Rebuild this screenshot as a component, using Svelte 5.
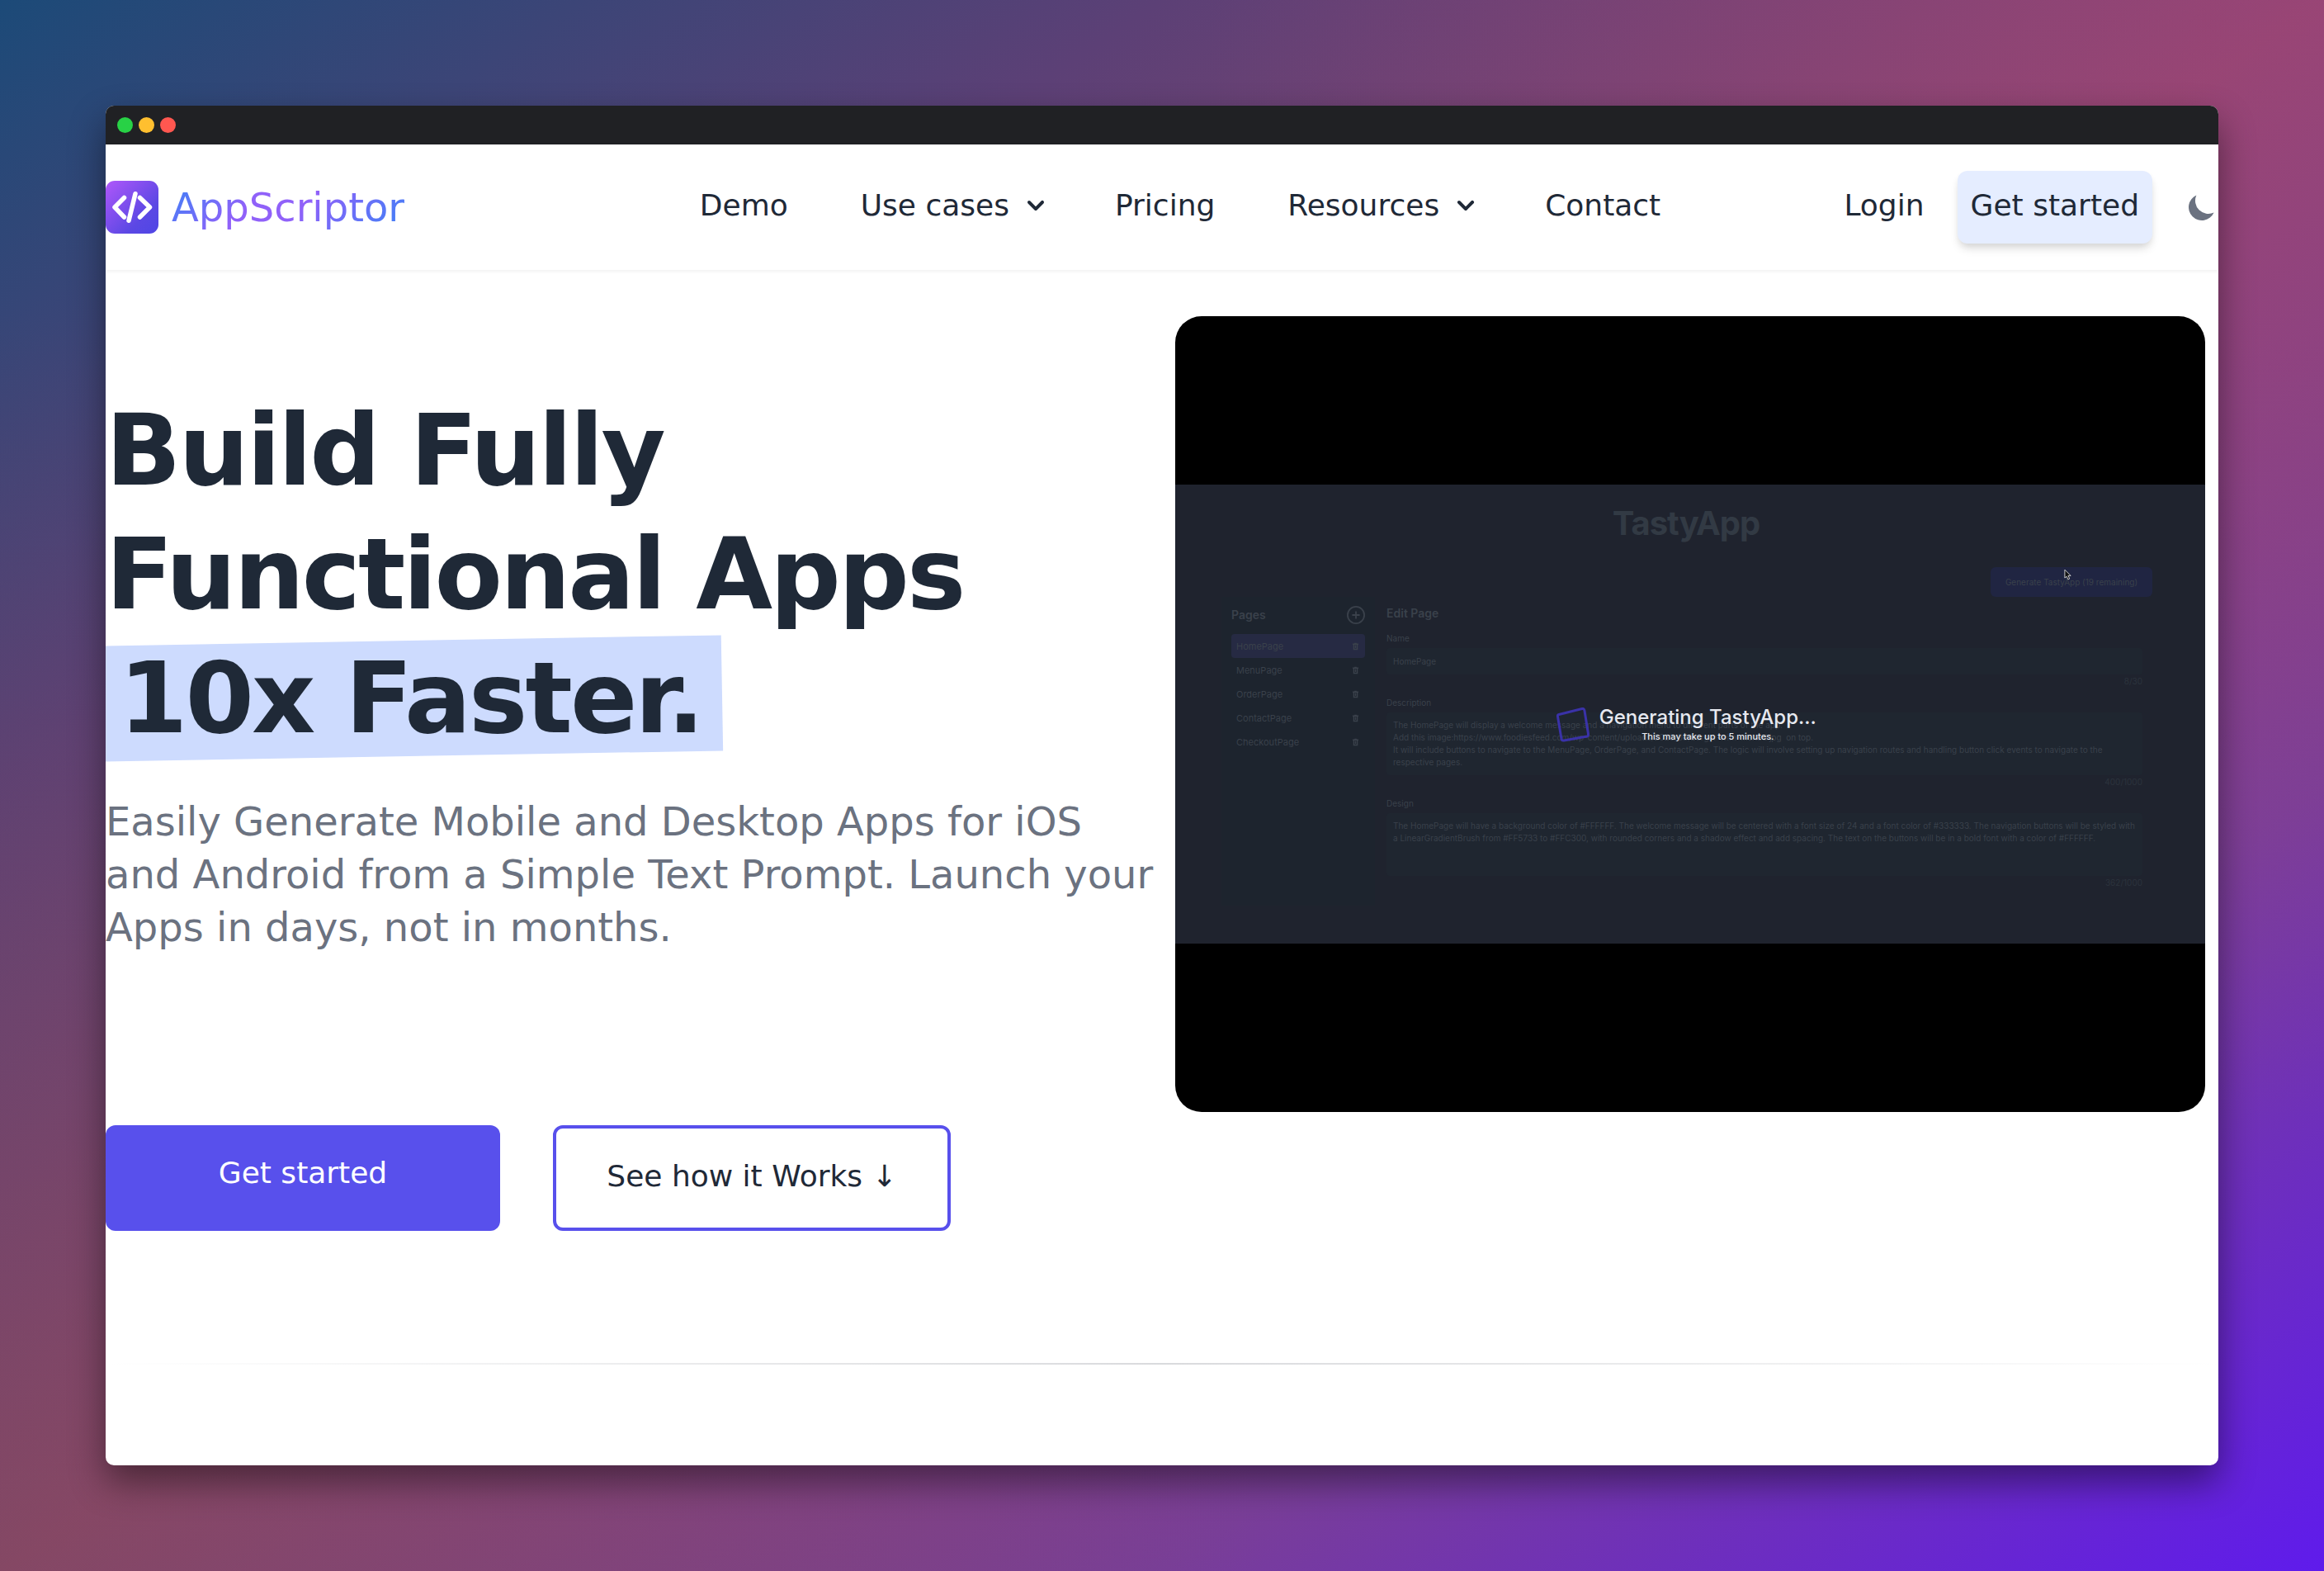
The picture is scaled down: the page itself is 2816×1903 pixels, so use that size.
<script>
  const pages = ['HomePage', 'MenuPage', 'OrderPage', 'ContactPage', 'CheckoutPage'];
  const description =
    'The HomePage will display a welcome message and a navigation menu to different parts of the app.\nAdd this image:https://www.foodiesfeed.com/wp-content/uploads/2023/06/burger-with-melted.jpg  on top.\nIt will include buttons to navigate to the MenuPage, OrderPage, and ContactPage. The logic will involve setting up navigation routes and handling button click events to navigate to the respective pages.';
  const design =
    'The HomePage will have a background color of #FFFFFF. The welcome message will be centered with a font size of 24 and a font color of #333333. The navigation buttons will be styled with a LinearGradientBrush from #FF5733 to #FFC300, with rounded corners and a shadow effect and add spacing. The text on the buttons will be in a bold font with a color of #FFFFFF.';
</script>

{#snippet chevron()}
  <svg class="chevron" viewBox="0 0 20 20" aria-hidden="true">
    <path
      fill="currentColor"
      fill-rule="evenodd"
      d="M5.293 7.293a1 1 0 011.414 0L10 10.586l3.293-3.293a1 1 0 111.414 1.414l-4 4a1 1 0 01-1.414 0l-4-4a1 1 0 010-1.414z"
    />
  </svg>
{/snippet}

<div class="desktop">
  <div class="window">
    <div class="titlebar">
      <span class="dot green"></span>
      <span class="dot yellow"></span>
      <span class="dot red"></span>
    </div>

    <header>
      <a class="brand" href="#home">
        <svg class="logo" viewBox="0 0 64 64" aria-hidden="true">
          <defs>
            <linearGradient id="logo-fill" x1="0" y1="0" x2="1" y2="1">
              <stop offset="0" stop-color="#b057fa" />
              <stop offset="0.7" stop-color="#5b48e4" />
              <stop offset="1" stop-color="#4f46e5" />
            </linearGradient>
          </defs>
          <rect width="64" height="64" rx="11" fill="url(#logo-fill)" />
          <g fill="none" stroke="#fff" stroke-width="5.500" stroke-linecap="round" stroke-linejoin="round">
            <path d="M22.500 20.500 11 32 22.500 44" />
            <path d="M41.500 20.500 53.500 32 41.500 44" />
            <path d="M36 15.700 28 48.300" />
          </g>
        </svg>
        <span class="name">AppScriptor</span>
      </a>
      <nav>
        <a href="#demo">Demo</a>
        <button type="button">Use cases {@render chevron()}</button>
        <a href="#pricing">Pricing</a>
        <button type="button">Resources {@render chevron()}</button>
        <a href="#contact">Contact</a>
      </nav>
      <div class="account">
        <a class="login" href="#login">Login</a>
        <a class="signup" href="#signup">Get started</a>
        <button class="theme" type="button" aria-label="Dark mode">
          <svg viewBox="0 0 20 20" aria-hidden="true">
            <path fill="currentColor" d="M17.293 13.293A8 8 0 016.707 2.707a8.001 8.001 0 1010.586 10.586z" />
          </svg>
        </button>
      </div>
    </header>

    <main>
      <section class="hero">
        <div class="copy">
          <h1>Build Fully Functional Apps <span class="mark">10x Faster.</span></h1>
          <p>
            Easily Generate Mobile and Desktop Apps for iOS and Android from a Simple Text Prompt.
            Launch your Apps in days, not in months.
          </p>
          <div class="actions">
            <a class="cta solid" href="#signup">Get started</a>
            <a class="cta outline" href="#how">See how it Works ↓</a>
          </div>
        </div>

        <div class="video">
          <div class="frame">
            <h2>TastyApp</h2>
            <div class="generate"><button type="button">Generate TastyApp (19 remaining)</button></div>
            <div class="editor">
              <aside>
                <div class="pages-head">
                  <h3>Pages</h3>
                  <button type="button" aria-label="Add page">
                    <svg viewBox="0 0 24 24" fill="none" stroke="currentColor" stroke-width="2" aria-hidden="true">
                      <circle cx="12" cy="12" r="11" />
                      <path d="M12 7v10M7 12h10" />
                    </svg>
                  </button>
                </div>
                <ul>
                  {#each pages as page, i}
                    <li class:current={i === 0}>
                      {page}
                      <svg viewBox="0 0 10 14" aria-hidden="true">
                        <path fill="none" stroke="currentColor" stroke-width="2" d="M0 3h10M3 2h4M2 3v9h6V3M5 5v5" />
                      </svg>
                    </li>
                  {/each}
                </ul>
              </aside>
              <form>
                <h3>Edit Page</h3>
                <label for="page-name">Name</label>
                <input id="page-name" value="HomePage" />
                <div class="count">8/30</div>
                <label for="page-description">Description</label>
                <textarea id="page-description" value={description}></textarea>
                <div class="count">400/1000</div>
                <label for="page-design">Design</label>
                <textarea id="page-design" value={design}></textarea>
                <div class="count">362/1000</div>
              </form>
            </div>
            <div class="progress">
              <svg class="spinner" viewBox="0 0 40 42" aria-hidden="true">
                <path
                  fill="none"
                  stroke="#3a32a8"
                  stroke-width="3"
                  stroke-linejoin="round"
                  d="M3 8.500Q1 9 1.500 11L6 38Q6.500 40.500 9 40L37 35Q38.800 34.500 38.500 32L34 4Q33.500 1 31 1.500Z"
                />
              </svg>
              <div class="status">
                <strong>Generating TastyApp...</strong>
                <span>This may take up to 5 minutes.</span>
              </div>
            </div>
            <svg class="cursor" viewBox="0 0 10 15" aria-hidden="true">
              <path fill="#111" stroke="#ddd" stroke-width="1" d="M1 1v11l2.500-2 2 4 2-1-2-4h3.500z" />
            </svg>
          </div>
        </div>
      </section>
      <hr />
    </main>
  </div>
</div>

<style>
  :global(body) {
    margin: 0;
  }

  .desktop,
  .desktop * {
    box-sizing: border-box;
  }

  .desktop {
    min-height: 100vh;
    padding: 128px;
    display: flex;
    background:
      radial-gradient(circle at bottom left, rgba(116, 74, 88, 0.4), transparent 45%),
      radial-gradient(circle at top right, rgba(166, 68, 132, 0.4), transparent 40%),
      linear-gradient(to bottom right, #1c4a78 0%, #5c4076 25%, #90466c 50%, #793e98 75%, #5f1bec 100%);
    font-family: 'DejaVu Sans', sans-serif;
    font-size: 36px;
    line-height: 56px;
    color: #1f2937;
  }

  .window {
    flex: 1;
    min-width: 0;
    border-radius: 10px;
    overflow: hidden;
    background: #fff;
    box-shadow: 0 20px 44px rgba(0, 0, 0, 0.45);
  }

  .titlebar {
    display: flex;
    align-items: center;
    gap: 7px;
    height: 47px;
    padding: 0 14px;
    background: #202124;
  }

  .dot {
    width: 19px;
    height: 19px;
    border-radius: 50%;
  }

  .green {
    background: #28d146;
  }

  .yellow {
    background: #ffbf2f;
  }

  .red {
    background: #ff5750;
  }

  a {
    color: inherit;
    text-decoration: none;
  }

  button {
    padding: 0;
    border: 0;
    background: none;
    color: inherit;
    font: inherit;
  }

  header {
    display: grid;
    grid-template-columns: 1fr auto 1fr;
    align-items: center;
    height: 152px;
    box-shadow: 0 2px 4px rgba(0, 0, 0, 0.06);
  }

  .brand {
    display: flex;
    align-items: center;
    justify-self: start;
    gap: 16px;
  }

  .logo {
    width: 64px;
    height: 64px;
  }

  .name {
    font-size: 48px;
    line-height: 64px;
    color: transparent;
    background: linear-gradient(135deg, #3b82f6, #9061f9 35%, #9061f9 55%, #3b82f6);
    background-clip: text;
  }

  nav {
    display: flex;
    gap: 88px;
    padding: 0 0 4px 44px;
  }

  nav button {
    display: flex;
    align-items: center;
    gap: 12px;
  }

  .chevron {
    width: 40px;
    height: 40px;
    margin-right: -12px;
  }

  .account {
    display: flex;
    align-items: center;
    justify-self: end;
  }

  .login {
    padding-bottom: 4px;
  }

  .signup {
    height: 88px;
    margin: 0 40px;
    padding: 14px 16px;
    border-radius: 12px;
    background: #e5edff;
    box-shadow: 0 8px 12px -2px rgba(0, 0, 0, 0.12), 0 4px 8px -2px rgba(0, 0, 0, 0.08);
  }

  .theme {
    display: flex;
  }

  .theme svg {
    width: 40px;
    height: 40px;
    color: #6b7280;
  }

  .hero {
    display: grid;
    grid-template-columns: 1fr 1fr;
    padding-top: 56px;
  }

  .copy {
    padding-top: 88px;
  }

  h1 {
    max-width: 1100px;
    margin: 0;
    font-size: 120px;
    line-height: 150px;
    font-weight: 700;
    letter-spacing: -3px;
  }

  .mark {
    position: relative;
    z-index: 0;
    display: inline-block;
    margin-left: -8px;
    padding: 0 24px;
  }

  .mark::before {
    content: '';
    position: absolute;
    inset: 5px 0;
    z-index: -1;
    background: #cddbfe;
    transform: rotate(-1deg);
  }

  .copy p {
    margin: 42px 0 0;
    font-size: 48px;
    line-height: 64px;
    color: #6b7280;
  }

  .actions {
    display: flex;
    gap: 64px;
    margin-top: 208px;
  }

  .cta {
    height: 128px;
    border-radius: 12px;
    text-align: center;
  }

  .solid {
    width: 478px;
    padding-top: 30px;
    background: #5850ec;
    color: #fff;
  }

  .outline {
    width: 482px;
    padding-top: 30px;
    border: 4px solid #5850ec;
  }

  .video {
    height: 964px;
    margin: 0 16px;
    padding: 204px 0;
    border-radius: 32px;
    background: #000;
  }

  .frame {
    position: relative;
    height: 556px;
    padding: 20px 64px 0;
    background: #1f232e;
    color: #3a414b;
    font-family: Inter, sans-serif;
    font-size: 11px;
    line-height: 18px;
  }

  h2 {
    margin: 0;
    padding-right: 10px;
    font-size: 40px;
    line-height: 54px;
    font-weight: 700;
    letter-spacing: -1px;
    text-align: center;
    color: #323a44;
  }

  .generate {
    display: flex;
    justify-content: flex-end;
    margin-top: 26px;
  }

  .generate button {
    width: 196px;
    height: 36px;
    border-radius: 6px;
    background: #202542;
    font-size: 10px;
  }

  .editor {
    display: grid;
    grid-template-columns: 178px 1fr;
    gap: 14px;
    margin-right: 12px;
  }

  aside {
    margin-left: -8px;
    padding: 10px 12px;
    background: #1d242e;
  }

  h3 {
    margin: 0;
    font-size: 14px;
    line-height: 24px;
    font-weight: 600;
  }

  .pages-head {
    display: flex;
    align-items: center;
    justify-content: space-between;
  }

  .pages-head button {
    display: flex;
  }

  .pages-head svg {
    width: 22px;
    height: 22px;
  }

  ul {
    margin: 11px 0 0;
    padding: 0;
    list-style: none;
  }

  li {
    display: flex;
    align-items: center;
    justify-content: space-between;
    height: 29px;
    padding: 0 8px 0 6px;
    border-radius: 4px;
  }

  li svg {
    width: 7px;
    height: 10px;
  }

  .current {
    background: #262a43;
  }

  form {
    padding: 8px 0 20px;
  }

  label {
    display: block;
    margin-top: 10px;
    font-size: 10px;
    line-height: 16px;
  }

  input,
  textarea {
    display: block;
    width: 100%;
    margin: 4px 0 0;
    padding: 0 8px;
    border: 0;
    border-radius: 4px;
    background: #1f2630;
    color: inherit;
    font: inherit;
    font-size: 10px;
    resize: none;
  }

  input {
    height: 32px;
  }

  textarea {
    height: 76px;
    padding: 8px 4px 8px 8px;
    line-height: 15px;
    overflow: hidden;
  }

  .count {
    font-size: 10px;
    line-height: 16px;
    text-align: right;
    color: #2c333d;
  }

  .progress {
    position: absolute;
    left: 37%;
    top: 268px;
    display: flex;
    align-items: center;
    gap: 12px;
    color: #e7e9f0;
  }

  .spinner {
    width: 40px;
    height: 42px;
  }

  .status {
    display: flex;
    flex-direction: column;
    align-items: center;
    font-weight: 500;
  }

  .status strong {
    font-size: 24px;
    line-height: 28px;
    font-weight: 500;
  }

  .cursor {
    position: absolute;
    top: 102px;
    right: 162px;
    width: 9px;
    height: 14px;
  }

  hr {
    height: 2px;
    margin: 160px 0 0;
    border: 0;
    background: linear-gradient(90deg, transparent, #d9dadd, transparent);
  }
</style>
